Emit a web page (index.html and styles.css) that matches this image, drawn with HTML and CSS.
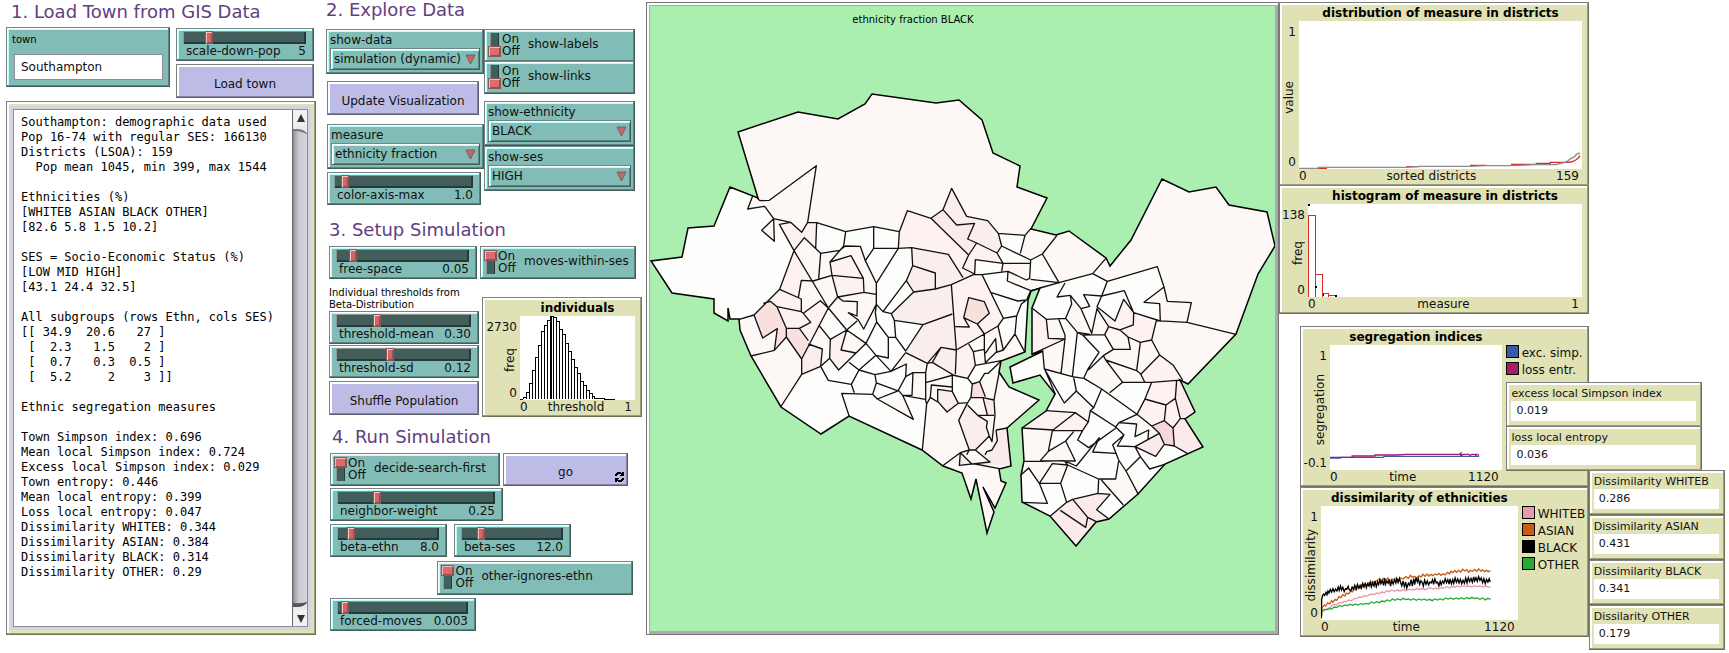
FILE: index.html
```html
<!DOCTYPE html>
<html lang="en">
<head>
<meta charset="utf-8">
<title>Town segregation model</title>
<link rel="stylesheet" href="styles.css">
</head>
<body>
<main class="board">

<section class="load">
  <h2>1. Load Town from GIS Data</h2>
  <div class="load-row">
    <div class="widget teal town">
      <label for="town">town</label>
      <input id="town" type="text" value="Southampton">
    </div>
    <div class="load-side">
      <div class="widget teal slider">
        <input id="scale" type="range" min="0" max="100" value="19">
        <div class="cap"><label for="scale">scale-down-pop</label><output>5</output></div>
      </div>
      <button class="widget btn">Load town</button>
    </div>
  </div>
  <div class="widget tan out">
    <div class="out-in">
<pre>Southampton: demographic data used
Pop 16-74 with regular SES: 166130
Districts (LSOA): 159
  Pop mean 1045, min 399, max 1544

Ethnicities (%)
[WHITEB ASIAN BLACK OTHER]
[82.6 5.8 1.5 10.2]

SES = Socio-Economic Status (%)
[LOW MID HIGH]
[43.1 24.4 32.5]

All subgroups (rows Ethn, cols SES)
[[ 34.9  20.6   27 ]
 [  2.3   1.5    2 ]
 [  0.7   0.3  0.5 ]
 [  5.2     2    3 ]]

Ethnic segregation measures

Town Simpson index: 0.696
Mean local Simpson index: 0.724
Excess local Simpson index: 0.029
Town entropy: 0.446
Mean local entropy: 0.399
Loss local entropy: 0.047
Dissimilarity WHITEB: 0.344
Dissimilarity ASIAN: 0.384
Dissimilarity BLACK: 0.314
Dissimilarity OTHER: 0.29</pre>
      <div class="bar">
        <button aria-label="Scroll up"><svg width="8" height="8" viewBox="0 0 8 8"><path d="M4 0L8 8H0Z" fill="#333"/></svg></button>
        <div class="track">
          <svg width="15" height="9" viewBox="0 0 15 9"><path d="M0 0H15V9Q12 3 4 3H0Z" fill="#e9e9ee"/><path d="M0 3H4Q12 3 15 9Q10 5 0 5Z" fill="#777"/></svg>
          <svg width="15" height="9" viewBox="0 0 15 9"><path d="M0 9H15V0Q12 6 4 6H0Z" fill="#e9e9ee"/><path d="M0 6H4Q12 6 15 0Q11 3 0 2Z" fill="#555"/></svg>
        </div>
        <button aria-label="Scroll down"><svg width="8" height="8" viewBox="0 0 8 8"><path d="M0 0H8L4 8Z" fill="#333"/></svg></button>
      </div>
    </div>
  </div>
</section>

<section class="control">
  <h2>2. Explore Data</h2>
  <div class="explore">
    <div class="stack">
      <div class="widget teal chooser">
        <label for="data">show-data</label>
        <div class="pick"><select id="data"><option>simulation (dynamic)</option></select><svg width="11" height="11" viewBox="0 0 11 11"><path d="M1 1H10L5.500 10Z" fill="#cc6464" stroke="#666"/></svg></div>
      </div>
      <button class="widget btn update">Update Visualization</button>
      <div class="widget teal chooser measure">
        <label for="measure">measure</label>
        <div class="pick"><select id="measure"><option>ethnicity fraction</option></select><svg width="11" height="11" viewBox="0 0 11 11"><path d="M1 1H10L5.500 10Z" fill="#cc6464" stroke="#666"/></svg></div>
      </div>
      <div class="widget teal slider axis">
        <input id="axis" type="range" min="0" max="100" value="5">
        <div class="cap"><label for="axis">color-axis-max</label><output>1.0</output></div>
      </div>
    </div>
    <div class="stack">
      <label class="widget teal switch"><input type="checkbox"><span class="onoff">On<br>Off</span><span class="name">show-labels</span></label>
      <label class="widget teal switch joined"><input type="checkbox"><span class="onoff">On<br>Off</span><span class="name">show-links</span></label>
      <div class="widget teal chooser ethnicity">
        <label for="ethn">show-ethnicity</label>
        <div class="pick"><select id="ethn"><option>BLACK</option></select><svg width="11" height="11" viewBox="0 0 11 11"><path d="M1 1H10L5.500 10Z" fill="#cc6464" stroke="#666"/></svg></div>
      </div>
      <div class="widget teal chooser">
        <label for="ses">show-ses</label>
        <div class="pick"><select id="ses"><option>HIGH</option></select><svg width="11" height="11" viewBox="0 0 11 11"><path d="M1 1H10L5.500 10Z" fill="#cc6464" stroke="#666"/></svg></div>
      </div>
    </div>
  </div>

  <h2 class="h-setup">3. Setup Simulation</h2>
  <div class="space-row">
    <div class="widget teal slider">
      <input id="free" type="range" min="0" max="100" value="10">
      <div class="cap"><label for="free">free-space</label><output>0.05</output></div>
    </div>
    <label class="widget teal switch"><input type="checkbox" checked><span class="onoff">On<br>Off</span><span class="name">moves-within-ses</span></label>
  </div>
  <div class="threshold-row">
    <div class="stack">
      <p class="note">Individual thresholds from<br>Beta-Distribution</p>
      <div class="widget teal slider">
        <input id="tmean" type="range" min="0" max="100" value="29">
        <div class="cap"><label for="tmean">threshold-mean</label><output>0.30</output></div>
      </div>
      <div class="widget teal slider sd">
        <input id="tsd" type="range" min="0" max="100" value="39">
        <div class="cap"><label for="tsd">threshold-sd</label><output>0.12</output></div>
      </div>
      <button class="widget btn shuffle">Shuffle Population</button>
    </div>
    <div class="widget tan plot p-ind">
      <h3>individuals</h3>
      <div class="yax"><span>2730</span><span class="vert">freq</span><span>0</span></div>
      <svg class="canvas" viewBox="0 0 345 252" preserveAspectRatio="none">
        <path fill="none" stroke="#000" stroke-width="3" shape-rendering="crispEdges" d="M0 250V249H9V250V244H18V250V230H27V250V202H36V250V163H45V250V124H54V250V88H63V250V46H72V250V28H81V250V13H90V250V2H93V250M90 2H99V250V5H108V250V16H117V250V40H126V250V55H135V250V82H144V250V106H153V250V130H162V250V154H171V250V171H180V250V195H189V250V208H198V250V222H207V250V233H216V250V240H222V250V246H252V249H285"/>
      </svg>
      <div class="xax"><span>0</span><span>threshold</span><span>1</span></div>
    </div>
  </div>

  <h2 class="h-run">4. Run Simulation</h2>
  <div class="run">
    <div class="row r1">
      <label class="widget teal switch"><input type="checkbox" checked><span class="onoff">On<br>Off</span><span class="name">decide-search-first</span></label>
      <button class="widget btn go"><span>go</span><svg width="9" height="10" viewBox="0 0 9 10" shape-rendering="crispEdges"><path d="M0 4V2H1V1H2V0H6V1H7V0H9V4H5V3H6V2H3V3H2V4ZM9 6V8H8V9H7V10H3V9H2V10H0V6H4V7H3V8H6V7H7V6Z"/></svg></button>
    </div>
    <div class="row r2">
      <div class="widget teal slider">
        <input id="nw" type="range" min="0" max="100" value="24">
        <div class="cap"><label for="nw">neighbor-weight</label><output>0.25</output></div>
      </div>
    </div>
    <div class="row r3">
      <div class="widget teal slider">
        <input id="be" type="range" min="0" max="100" value="11">
        <div class="cap"><label for="be">beta-ethn</label><output>8.0</output></div>
      </div>
      <div class="widget teal slider">
        <input id="bs" type="range" min="0" max="100" value="17">
        <div class="cap"><label for="bs">beta-ses</label><output>12.0</output></div>
      </div>
    </div>
    <div class="row r4">
      <label class="widget teal switch"><input type="checkbox" checked><span class="onoff">On<br>Off</span><span class="name">other-ignores-ethn</span></label>
    </div>
    <div class="row r5">
      <div class="widget teal slider">
        <input id="fm" type="range" min="0" max="100" value="3">
        <div class="cap"><label for="fm">forced-moves</label><output>0.003</output></div>
      </div>
    </div>
  </div>
</section>

<section class="view">
<svg viewBox="650 6 625 625" role="img" aria-label="Map of districts">
  <rect x="650" y="6" width="625" height="625" fill="#aaeeb0"/>
  <path id="coast" fill="#fdf8f6" d="M758 198L738 132L798 112L838 119L865 104L872 94L936 103L959 100L982 120L993 153L1020 166L1017 187L1047 198L1031 229L1056 235L1069 231L1106 258L1110 266L1131 240L1162 179L1189 192L1216 187L1229 205L1267 212L1275 246L1258 274L1236 334L1188 384L1180 380L1195 412L1185 419L1203 447L1165 464L1138 494L1109 519L1096 522L1076 546L1050 516L1022 502L1021 475L1024 461L1022 428L1046 411L1055 394L1040 375L1013 383L1010 367L1043 351L1032 354L1032 308L1040 288L1031 291L1028 300L1025 352L1001 361L999 372L1009 387L1039 400L1007 428L1011 466L999 469L1001 481L1006 483L995 508L983 487L994 512L987 533L976 479L971 499L962 473L943 466L922 450L849 416L821 434L781 407L751 356L740 330L739 319L730 319L728 308L728 321L714 313V299L672 293L651 261L682 257L688 228L714 226L730 187Z"/>

  <!-- pale districts, west and centre -->
  <g transform="translate(740 200) scale(.33333)">
    <path fill="#fdfdfc" d="M-29-38L38-12L23 27L74 19L101 56L65 91L103 124L104 60L118 73L162 152L119 268L42 345L-5 359L-35 357L-77 297L-203 278L-268 184L-175 172L-157 84L-79 78Z
    M230 68L317 95L401 80L478 95L475 145L515 143L518 197L499 242L521 276L454 341L463 361L549 374L497 453L453 514L497 492L497 530L519 518L516 586L557 597L547 750L328 650L242 703L134 620L185 523L242 499L269 475L271 418L236 375L265 324L320 390L352 362L371 387L409 313L409 250L361 139L316 138L299 151L242 160L227 146Z
    M775 100L855 106L841 160L785 138ZM706 179L789 190L785 214L704 222ZM785 138L872 180L789 190L771 159ZM726 224L804 214L802 243L872 272L860 300L830 348L790 355ZM872 180L907 162L957 248L872 238ZM900 265L957 248L1057 221L1102 244L1252 200L1272 261L1212 307L1259 311L1261 363L1181 338L1151 298L1125 363L1071 326L1050 400L1023 326L995 286L992 312L977 355L919 358L876 322ZM825 402L830 348L860 300L855 457ZM690 432L733 402L733 448L700 455ZM774 378L790 355L830 348L825 402L790 450ZM637 525L683 535L697 552L683 608L655 610L637 575ZM683 535L706 496L784 482L740 520L719 545L697 552ZM955 355L977 355L1012 397L1050 404L1094 404L1120 448L1045 508L1031 535L910 507L907 452L810 500L818 548L900 526L974 609L1009 573L1061 623L1051 632L1085 567L1191 643L1235 547L1148 547L1109 578L1001 532Z"/>
    <path fill="#fdf8f6" d="M230 68L227 146L242 160L236 236L219 243L162 152L118 73L152 67L185 97L203 67ZM320 390L378 430L348 459L303 450ZM519 518H556L557 597L516 586ZM412 597L476 572L520 658Z"/>
    <path fill="#fdf2f1" d="M118 73L152 67L185 97L203 67L230 68L227 146L193 113L162 152ZM162 152L219 243L184 241L175 293L119 268ZM119 268L184 297V335L111 320L91 304L70 310ZM111 320L184 335L212 367L178 385H139ZM270 186L333 167L370 235L276 226ZM276 226L370 235L372 277L293 291ZM190 340L241 302L265 324L205 432L178 385L212 367ZM478 95L502 32L573 55L686 165L668 204L704 222L669 233L625 163L515 143H475ZM634 254L702 223L726 224L790 355L774 378L649 450ZM271 418L320 390L303 450L348 459L296 510L269 475ZM686 165L710 129L771 159L789 190L706 179L704 222L668 204ZM649 450L686 432L700 455L706 496L683 535L646 523ZM876 330L919 358L925 415L975 417L878 463ZM1071 326L1125 363L1151 298L1181 338L1249 362L1235 420L1201 427L1164 411L1140 390L1106 380Z"/>
    <path fill="#faeeec" d="M515 143L625 163L669 233L634 254L586 267L521 276L499 242L518 197ZM521 276L634 254L637 342L549 374L463 361L454 341ZM549 374L637 342L649 450L603 442L562 490L497 458ZM185 477L205 432L247 447L242 499L185 523ZM609 29L635 -35L680 49L743 62L775 100L785 138L771 159L683 117L704 70L650 75ZM577 487L603 442L649 450L646 523ZM593 568L636 574L640 595L655 610L621 636L593 604ZM656 661L683 616L713 646L742 664L748 708L706 750H688Z"/>
    <path fill="#faeae9" d="M573 55L609 29L650 75L704 70L683 117L710 129L686 165ZM729 593L762 600L765 645H742ZM768 690L802 684L812 798L706 792L750 786L735 765L772 722ZM658 796L661 758L695 791Z"/>
    <path fill="#f9e0df" d="M42 345L91 304L111 320L139 385V411L103 451L112 386L68 414ZM139 385H178L205 432L185 477L139 411ZM686 293L733 305L748 340L712 372L671 353ZM703 550L719 545L734 593L690 592Z"/>
  </g>

  <!-- pale and pink districts, south-east -->
  <g transform="translate(1000 340) scale(.33333)">
    <path fill="#fdfdfc" d="M134 88L221 112L229 153L193 189ZM271 212L305 147L411 223L347 261ZM265 246L271 212L347 261L266 323L233 300ZM298 293L347 265L372 285L338 314L346 340L278 336ZM229 378L278 336L346 340L356 363L347 417L296 417ZM347 261L357 248L410 252L405 290L446 270L444 297L405 320L352 318L372 285ZM352 318L405 320L421 350L378 393L356 360L338 314ZM378 393L421 350L449 387L494 373L415 463ZM203 375L296 417L294 460L218 478L200 487L182 430ZM62 406L86 384L118 430H182L200 487L151 528L65 487ZM294 460L304 420L370 495L327 537L290 509L330 463ZM421 350L405 320L467 349L493 313L563 341L449 387ZM157 272L221 275L197 303L145 334ZM197 303L248 271L233 300L266 323L226 363Z"/>
    <path fill="#fdf2f1" d="M139 212L226 218L159 270L66 264ZM226 218L265 246L248 271H159ZM434 177L455 127L530 121L526 175L498 195ZM411 223L434 179L498 195L493 242L455 258ZM422 102L480 45L520 76L541 120L434 126ZM498 195L526 175L541 236L519 264L493 242Z"/>
    <path fill="#faeae9" d="M151 528L218 478L294 460L330 463L290 509L327 537L289 545L229 617ZM541 236L556 238L610 320L563 341L523 318L519 264ZM530 121L541 120L586 215L541 236L526 175ZM405 320L478 280L493 313L467 349Z"/>
    <path fill="#f7d8d8" d="M455 258L493 242L519 264L523 318L493 313L478 280Z"/>
  </g>

  <g fill="none" stroke="#111" stroke-width="4" stroke-linejoin="round">
    <path transform="translate(740 200) scale(.33333)" d="M38-12L23 27L74 19L101 56M52-5L60 2L88 1L229-103L203 67
    M101 56L65 91L103 124L101 56L152 67L185 97L203 67L230 68L317 95L401 80L478 95M152 67L118 73L162 152L193 113L242 160L299 151L316 138L361 139L376 182L409 250M230 68L227 146M317 95L311 138L270 186L333 167L370 235L276 226L270 186M242 160L236 236M162 152L265 324M162 152L119 268L42 345L-5 359M119 268L184 297V335L111 320M175 293L184 241L219 243L276 226L293 291L372 277L370 235M293 291L265 324M372 277L409 283V250M401 80V145L376 182M401 145H475L478 95L502 32L573 55L609 29L635-35L680 49L743 62L775 100L855 106L873 85
    M609 29L650 75L704 70L683 117L710 129L771 159L785 138L775 100M573 55L686 165L710 129M686 165L668 204L704 222M475 145L515 143L625 163L669 233M475 145L409 250M515 143L518 197L586 219V267M518 197L499 242L521 276L586 267L634 254L702 223M499 242L429 335L409 313V283M521 276L454 341L429 335M454 341L463 361L549 374L637 342M634 254L649 450L646 523M293 291L309 303L352 305L351 348L325 338L355 360L371 387L409 313L406 338L410 366M265 324L320 390L352 362M265 324L241 302L190 340L212 367L178 385H139L111 320L91 304L70 310M184 335L190 340M42 345L68 414L112 386L103 451L33 468M139 385V411L103 451M139 411L185 477L265 324M178 385L205 422M185 477V523L122 621M185 523L242 499L247 447L205 432M236 375L271 418L320 390L378 430L410 366L445 412H467L463 361M271 418L269 475L296 510L378 430M320 390L303 450L348 459M445 412V474L408 466L378 430M467 412L497 453L549 374M497 458L453 514L408 466L357 510L327 487M497 458L562 490L603 442L649 450M453 514L499 492L497 530L474 573M269 475L242 499L265 541L334 553L357 510L405 524L453 514M405 524L409 549L398 583L305 580L328 650M409 549L474 573M334 553L343 578M497 530L519 518H556M519 518L516 586H488M562 490L557 518V600M577 487L640 525L557 548M562 490L577 487L603 442
    M686 293L733 305L748 340L712 372L671 353ZM671 353L688 381L646 380M712 372L733 402M649 450L733 402L774 378L790 355L726 224H702M726 224L804 214L859 240L869 235L872 180L785 138M704 222L706 179L789 190H872M789 190L785 214M771 159L789 190M804 214L802 243L872 272L900 265M841 160L855 106M872 180L907 162L951 106M907 162L957 248L872 238M754 278L833 303L860 300L872 272M790 355L830 348L844 312L860 300M830 348L825 402L855 457M774 378L790 450L767 458M790 450L825 402
    M637 525V575L655 610L683 608L693 592L697 552L683 535L637 525M636 561L574 555L571 592L560 612M636 574L593 568V604L621 636L655 610M571 592L593 606M547 750L560 612L556 598L488 586L476 572L412 597L520 658L488 586M412 597L398 583M683 608L656 661L688 750L661 758L658 796L750 786L706 750H688M661 758L608 797M661 758L695 791M680 764L688 750M706 750L748 708L739 682L742 664L713 646L683 616M713 646H762M748 708L756 725L765 645L762 600L778 515M693 592L729 593L742 645M729 593L762 600M697 552L719 545L736 590M719 545L734 520H745L784 482M768 690L802 684M768 690L772 722L756 750L740 755L735 765M706 792L778 806M683 535L706 496L735 491L784 482M706 496L700 455L686 432M700 455L733 448V402M733 448L736 488L770 455L767 416L736 460"/>
    <path transform="translate(960 160) scale(.33333)" d="M398 341L437 296M240 384L297 368L398 341L442 364L592 320L612 381L622 424L694 428L681 487L828 523M315 369L291 411L331 406L363 446L389 439L371 404L425 408L442 364M425 408L493 392L521 458L601 483L599 431L552 427L612 381M425 408L411 440L465 483L491 418L521 458L520 495L480 510L446 500L411 446L395 520L363 446M331 406L335 432L317 475L259 478L215 443M317 475L352 517L390 523M259 478L265 535L315 537L215 583M315 537L303 640M295 475L315 525V537M352 517L337 650M352 517L368 525L434 524L460 568H511L504 531L480 510M368 525L417 577L385 625L371 655M446 500L434 524M460 568L430 587L385 630M504 531L541 547L575 540L589 482L681 487M541 547L530 632M430 587L437 600L530 632L543 642L599 585L575 540M599 585L640 616L668 660M437 600L488 667M248 572L253 627L337 650L371 655"/>
    <path transform="translate(1000 340) scale(.33333)" d="M134 88L166 163M134 88L193 189L229 153L281 203L271 212M252 115L305 147L411 223L434 179L455 127L530 121H541M221 112L229 153M281 203L305 147M329 158L368 127H455M422 102L434 126M434 177L498 195L526 175L530 121M526 175L541 236H556M498 195L493 242L519 264L541 236M411 223L455 258L493 242M455 258L478 280L493 313L523 318L519 264M523 318L563 341M478 280L405 320L352 318L372 285L347 261L357 248L411 223M357 248L410 252L405 290L446 270L444 297M405 320L467 349L493 313M405 320L421 350L378 393L415 463M421 350L449 387L494 373M372 285L338 314L356 360L378 393M347 261L271 212L265 246L226 218L139 212M226 218L159 270L66 264M159 272L248 271L265 246M248 271L233 300L266 323L347 265M157 272L145 334L197 303L221 275M145 334L121 362M197 303L226 363L121 362M73 364H121L192 362L203 375L296 417H347L356 363M192 362L229 378L298 293L278 336L346 340M203 375L182 430H118L157 371L203 375M62 406L86 384L118 430L142 490L65 487M182 430L200 487L151 528M200 487L218 478L294 460L296 417M294 460L330 463L290 509L327 537M304 420L370 495M181 511L257 562L263 532L289 545M218 478L263 532"/>
  </g>
  <use href="#coast" class="shore"/>
  <text x="913" y="23" text-anchor="middle" font-size="10">ethnicity fraction BLACK</text>
</svg>
</section>

<section class="charts">
  <div class="upper">
    <div class="widget tan plot p-dist">
      <h3>distribution of measure in districts</h3>
      <div class="yax"><span>1</span><span class="vert">value</span><span>0</span></div>
      <svg class="canvas" viewBox="0 0 849 444" preserveAspectRatio="none">
        <g fill="none" stroke-width="4">
        <path stroke="#d82c20" d="M58 442H84M322 437H362M513 433H563M636 430H712V427H754V424H800L818 423L830 417L838 411L843 404"/>
        <path stroke="#8d8d8d" d="M0 442H58V439H322L362 436H514L562 434H640L712 431H770L790 426L803 422L815 413L827 407L832 400L843 396"/></g>
      </svg>
      <div class="xax"><span>0</span><span>sorted districts</span><span>159</span></div>
    </div>
    <div class="widget tan plot p-hist">
      <h3>histogram of measure in districts</h3>
      <div class="yax"><span>138</span><span class="vert">freq</span><span>0</span></div>
      <svg class="canvas" viewBox="0 0 822 279" preserveAspectRatio="none" shape-rendering="crispEdges">
        <path fill="none" stroke="#d82c20" stroke-width="3" d="M1 279V34H22V279V211H44V279V268H62V279V273H84V279"/>
        <path d="M0 0H6V6H0ZM22 246H27V252H22ZM44 270H48V276H44ZM82 273H86V279H82Z"/>
      </svg>
      <div class="xax"><span>0</span><span>measure</span><span>1</span></div>
    </div>
  </div>
  <div class="lower">
    <div class="plots">
      <div class="widget tan plot p-seg">
        <h3>segregation indices</h3>
        <div class="yax"><span>1</span><span class="vert">segregation</span><span>-0.1</span></div>
        <svg class="canvas" viewBox="0 0 519 375" preserveAspectRatio="none">
          <g fill="none" stroke-width="4">
          <path stroke="#345da9" d="M0 339H32V337H160L165 334H395V330L400 334H449V330"/>
          <path stroke="#a71b6a" d="M0 337H67V333H136V330H200L230 328H392L396 324V332L402 328H420L424 332L428 328H440V332L444 328H449"/></g>
        </svg>
        <ul class="legend"><li><i class="blue"></i>exc. simp.</li><li><i class="wine"></i>loss entr.</li></ul>
        <div class="xax"><span>0</span><span>time</span><span>1120</span></div>
      </div>
      <div class="widget tan plot p-dis">
        <h3>dissimilarity of ethnicities</h3>
        <div class="yax"><span>1</span><span class="vert">dissimilarity</span><span>0</span></div>
        <svg class="canvas" viewBox="0 0 594 342" preserveAspectRatio="none">
          <g fill="none" stroke-width="4">
          <path stroke="#e599ab" d="M1 338L3 318L12 312L20 308L28 304L34 298L42 295L48 297L54 290L62 291L70 286L78 287L84 282L92 284L100 277L108 278L114 273L122 274L130 269L138 271L146 266L154 264L160 266L168 261L176 263L184 258L192 260L198 254L206 257L214 252L222 256L230 252L240 255L248 250L256 254L264 251L274 250L282 252L290 247L298 251L306 247L314 251L322 248L330 246L338 249L346 246L354 250L362 245L370 247L380 242L388 246L396 241L404 244L412 240L420 243L430 239L438 242L446 240L456 243L464 239L472 242L480 240L488 243L498 240L506 244L512 242"/>
          <path stroke="#c65c17" d="M1 330L3 305L10 297L14 300L20 290L26 294L32 284L36 289L42 280L48 283L54 272L60 275L66 266L72 270L76 262L84 263L90 254L94 258L100 248L106 252L112 243L118 247L122 236L128 242L134 235L138 238L144 230L150 234L156 226L162 231L168 224L176 219L182 224L188 217L196 223L202 216L208 226L214 219L220 222L226 217L234 222L240 216L248 219L256 212L264 217L270 208L276 214L282 211L290 216L296 209L302 213L308 205L314 211L320 204L326 210L332 205L338 209L344 204L350 207L356 202L362 208L368 204L376 206L382 199L388 204L392 196L398 200L404 194L410 199L416 193L422 198L428 190L434 195L440 191L446 199L450 193L458 196L464 190L470 196L476 189L484 196L488 191L494 197L500 193L506 197L512 194"/>
          <path stroke="#29aa30" d="M1 336L3 316L10 310L18 311L26 308L32 309L40 303L48 304L56 299L64 301L72 297L80 299L88 295L96 298L104 294L112 297L120 293L128 295L136 292L144 294L152 288L160 292L168 287L176 290L184 285L192 287L200 282L208 285L216 279L224 283L232 278L240 282L248 277L256 281L264 279L272 282L280 278L288 283L296 279L304 282L312 279L320 283L328 280L336 284L344 279L352 282L360 278L368 282L376 276L384 279L392 276L400 280L408 276L416 279L424 275L432 279L440 275L448 278L456 274L464 278L472 276L480 280L488 276L496 282L504 277L512 280"/>
          <path stroke="#000" stroke-width="4" d="M1 336L2 280L5 268L8 264L11 268L15 259L18 266L21 255L24 261L28 250L32 258L36 248L40 257L44 249L48 255L52 243L55 253L59 240L62 252L66 244L70 257L74 248L78 250L82 241L85 251L90 254L94 243L98 250L102 238L106 249L110 235L114 246L118 238L122 247L126 232L130 243L134 230L137 245L141 233L145 240L149 228L152 243L156 231L160 240L163 225L167 242L171 228L174 236L178 221L181 233L185 224L189 238L192 216L195 235L199 225L203 232L206 220L210 240L214 224L218 234L222 221L226 231L229 218L233 230L237 217L240 228L244 240L248 225L252 242L256 228L259 246L264 232L268 238L272 221L276 240L280 218L283 236L287 215L291 228L294 218L298 235L302 224L306 230L309 240L313 222L317 235L321 225L325 237L329 228L333 231L337 221L340 235L344 219L348 231L352 228L356 240L360 226L363 236L367 225L371 232L375 218L379 230L383 221L387 234L390 219L394 233L398 221L401 232L405 216L409 229L413 219L417 231L421 220L425 233L429 223L433 232L437 216L441 231L445 215L449 227L453 217L457 229L461 213L464 225L468 215L472 226L476 212L480 223L484 216L488 230L492 218L496 233L500 220L504 228L508 218L511 228"/></g>
        </svg>
        <ul class="legend"><li><i class="pink"></i>WHITEB</li><li><i class="orange"></i>ASIAN</li><li><i class="black"></i>BLACK</li><li><i class="green"></i>OTHER</li></ul>
        <div class="xax"><span>0</span><span>time</span><span>1120</span></div>
      </div>
    </div>
    <div class="mons-a">
      <div class="widget tan monitor"><span>excess local Simpson index</span><output>0.019</output></div>
      <div class="widget tan monitor"><span>loss local entropy</span><output>0.036</output></div>
    </div>
    <div class="mons-b">
      <div class="widget tan monitor"><span>Dissimilarity WHITEB</span><output>0.286</output></div>
      <div class="widget tan monitor"><span>Dissimilarity ASIAN</span><output>0.431</output></div>
      <div class="widget tan monitor"><span>Dissimilarity BLACK</span><output>0.341</output></div>
      <div class="widget tan monitor"><span>Dissilarity OTHER</span><output>0.179</output></div>
    </div>
  </div>
</section>
</main>
</body>
</html>
```
FILE: styles.css
```css
* { box-sizing: border-box; }
body {
  margin: 0;
  background: #fff;
  color: #111;
  font: 12px/14px "DejaVu Sans", sans-serif;
}
button, input, select { font: inherit; color: inherit; margin: 0; }
h2 {
  margin: 0;
  color: #61407f;
  font-size: 18px;
  line-height: 18px;
  font-weight: normal;
  white-space: nowrap;
}
.board {
  display: grid;
  grid-template-columns: minmax(0, 310fr) minmax(0, 330fr) minmax(0, 633fr) minmax(0, 446fr);
  align-items: start;
  padding: 0 4px 0 6px;
}

/* bevelled widgets */
.widget {
  border: 1px solid #7f7f7f;
  border-right-color: var(--dark);
  border-bottom-color: var(--dark);
  background: var(--face);
  box-shadow: inset -1px -1px 0 var(--mid), inset 1px 1px 0 #fff, inset 2px 2px 0 var(--light);
}
.teal { --face: #82bcb6; --light: #b5ffff; --mid: #5b847f; --dark: #415e5b; }
.tan { --face: #e0e1b5; --light: #fff; --mid: #9d9e7f; --dark: #70715b; }
.btn {
  --face: #bcbce6; --light: #fff; --mid: #8484a1; --dark: #5e5e73;
  display: block;
  height: 34px;
  padding: 5px 0 0;
  border-radius: 0;
  text-align: center;
}
.stack { display: flex; flex-direction: column; min-width: 0; }

.slider { height: 33px; padding: 2px 7px 0 6px; }
.slider input {
  display: block;
  width: 100%;
  height: 13px;
  appearance: none;
  background: linear-gradient(#425e5a, #425e5a) 0 1px / 100% 12px no-repeat;
  box-shadow: inset 1px 1px 0 #8a9a98, inset -2px -2px 0 #25383a;
}
.slider input::-webkit-slider-thumb {
  appearance: none;
  width: 8px;
  height: 13px;
  border: 1px solid #8a5a5a;
  background: #cc6868;
  box-shadow: inset 1px 1px 0 #ffc0c0, inset -1px -1px 0 #994c4c;
}
.cap { display: flex; justify-content: space-between; padding-left: 3px; line-height: 15px; white-space: nowrap; }

.switch { display: flex; align-items: flex-start; height: 33px; padding: 3px 0 0 3px; white-space: nowrap; }
.switch input {
  display: flex;
  flex: none;
  width: 13px;
  height: 24px;
  appearance: none;
  align-items: flex-end;
  background: linear-gradient(90deg, #8a9a98 1px, #425e5a 1px, #425e5a 8px, #25383a 8px) center / 9px 100% no-repeat;
}
.switch input::before {
  content: "";
  width: 13px;
  height: 9px;
  border: 1px solid #8a5a5a;
  background: #d96c6c;
  box-shadow: inset 1px 1px 0 #ffb0b0, inset -1px -1px 0 #994c4c;
}
.switch input:checked { align-items: flex-start; }
.onoff { width: 27px; padding-left: 1px; line-height: 12px; }
.name { line-height: 22px; }

.chooser { height: 45px; padding: 3px 3px 0; }
.chooser label { display: block; line-height: 15px; }
.pick { display: grid; align-items: center; }
.pick select {
  grid-area: 1 / 1;
  width: 100%;
  height: 22px;
  padding: 0 0 1px 3px;
  border: 1px solid #7f7f7f;
  border-radius: 0;
  border-right-color: #415e5b;
  border-bottom-color: #415e5b;
  appearance: none;
  background: #82bcb6;
  box-shadow: inset 1px 1px 0 #fff, inset 2px 2px 0 #b5ffff, inset -1px -1px 0 #5b847f;
}
.pick svg { grid-area: 1 / 1; justify-self: end; margin-right: 4px; pointer-events: none; }

/* load column */
.load { padding-top: 3px; }
.load h2 { padding-left: 5px; margin-bottom: 6px; }
.load-row { display: grid; grid-template-columns: 164fr 138fr; gap: 6px; padding-right: 2px; }
.load-side { padding-top: 1px; min-width: 0; }
.load-side .btn { width: 100%; margin-top: 3px; }
.town { height: 60px; padding: 3px 6px 0 5px; font-size: 10px; }
.town label { display: block; height: 23px; line-height: 18px; color: #000; }
.town input { display: block; width: calc(100% - 2px); height: 26px; margin-left: 2px; padding: 0 6px; border: 1px solid #8c8c9c; background: #fff; font-size: 12px; }
.out { margin-top: 3px; padding: 4px 4px 4px 3px; }
.out-in { display: flex; border: 3px solid #d3d4de; outline: 1px solid #8c8c9c; outline-offset: -4px; background: #fff; }
.out pre {
  flex: 1;
  min-width: 0;
  height: 518px;
  margin: 0;
  padding: 6px 0 0 8px;
  font: 12px/15px "DejaVu Sans Mono", monospace;
  color: #000;
}
.bar { display: flex; flex: none; flex-direction: column; width: 16px; border-left: 1px solid #666; }
.bar button { flex: none; display: grid; place-items: center; width: 100%; height: 17px; padding: 0; border: 0; background: #f0f0f3; }
.track {
  flex: 1;
  display: flex;
  flex-direction: column;
  justify-content: space-between;
  background: linear-gradient(90deg, #8e8e92, #c8c8ce 35%, #d8d8e0);
}

/* control column */
.control { padding: 1px 0 0 10px; }
.control h2 { padding-left: 0; margin-bottom: 10px; }
.control .h-setup { margin: 16px 0 7px; padding-left: 3px; }
.control .h-run { margin: 11px 0 7px; padding-left: 6px; }
.explore { display: grid; grid-template-columns: minmax(0, 158fr) minmax(0, 151fr); align-items: start; padding-right: 11px; }
.update { margin: 7px 5px 9px 1px; }
.measure { margin-left: 1px; }
.axis { margin: 3px 3px 0 1px; }
.joined { margin-top: -1px; }
.ethnicity { margin-top: 7px; }
.space-row { display: grid; grid-template-columns: 148fr 156fr; gap: 3px; padding: 0 10px 0 3px; }
.threshold-row { display: grid; grid-template-columns: minmax(0, 150fr) minmax(0, 160fr); gap: 3px; align-items: end; padding: 8px 4px 0 3px; }
.threshold-row .stack { padding-bottom: 2px; }
.note { margin: 0; font-size: 10px; line-height: 12px; white-space: nowrap; color: #000; }
.sd { margin-top: 1px; }
.shuffle { margin-top: 3px; }
.run { padding-left: 4px; }
.row { display: grid; }
.r1 { grid-template-columns: 170fr 125fr 15fr; column-gap: 3px; }
.r2 { grid-template-columns: 173fr 143fr; margin-top: 2px; }
.r3 { grid-template-columns: 117fr 117fr 68fr; column-gap: 7px; margin-top: 3px; }
.r4 { grid-template-columns: 195fr; margin-top: 4px; padding: 0 4% 0 34%; }
.r4 .switch { height: 34px; }
.r5 { grid-template-columns: 146fr 170fr; margin-top: 3px; }
.go { display: grid; height: 33px; align-items: center; }
.go span, .go svg { grid-area: 1 / 1; }
.go svg { place-self: end; margin: 0 3px 3px 0; }

/* map */
.view {
  margin-top: 2px;
  padding: 3px;
  border: 1px solid #747474;
  background: #ababab;
  box-shadow: inset 2px 2px 0 #fff;
}
.view svg { display: block; width: 100%; }
.view text { fill: #000; }
.shore { fill-opacity: 0; stroke: #000; stroke-width: 1.5px; }

/* charts */
.charts { padding-top: 2px; }
.upper { display: grid; grid-template-columns: minmax(0, 310fr); padding-right: 136px; }
.plot {
  display: grid;
  grid-template-columns: var(--y) minmax(0, 1fr) var(--legend, 0px);
  grid-template-rows: 16px auto 14px;
  padding: 2px 6px 2px 2px;
  color: #111;
}
.plot h3 { grid-area: 1 / 2; justify-self: center; margin: 0; font-size: 12px; line-height: 16px; white-space: nowrap; color: #000; }
.yax { grid-area: 2 / 1; display: flex; flex-direction: column; justify-content: space-between; align-items: flex-end; padding: 4px 3px 0 0; line-height: 14px; }
.vert { writing-mode: vertical-rl; transform: rotate(180deg); line-height: 13px; }
.canvas { grid-area: 2 / 2; display: block; width: 100%; background: #fff; }
.xax { grid-area: 3 / 2; display: flex; justify-content: space-between; padding-right: 3px; }
.p-ind { --y: 35px; }
.p-ind .canvas { height: 84px; }
.p-dist { --y: 17px; }
.p-dist .canvas { height: 148px; }
.p-hist { --y: 26px; }
.p-hist .canvas { height: 93px; }
.p-hist { margin-top: -1px; }
.p-seg { --y: 27px; --legend: 80px; }
.p-seg .canvas { height: 125px; }
.p-dis { --y: 18px; --legend: 64px; }
.p-dis .canvas { height: 114px; }
.p-seg .yax, .p-dis .yax { padding-bottom: 0; }
.legend { grid-area: 2 / 3; margin: 0 0 0 4px; padding: 0; list-style: none; white-space: nowrap; }
.legend li { display: flex; gap: 3px; height: 17px; line-height: 17px; }
.legend i { flex: none; width: 13px; height: 13px; border: 1px solid #000; }
.blue { background: #345da9; }
.wine { background: #a71b6a; }
.pink { background: #e599ab; }
.orange { background: #c65c17; }
.black { background: #000; }
.green { background: #29aa30; }
.lower {
  display: grid;
  grid-template-columns: 206fr 82fr 113fr 23fr;
  align-items: start;
  margin-top: 12px;
  padding-left: 21px;
}
.plots { grid-area: 1 / 1 / 2 / 3; min-width: 0; }
.mons-a { grid-area: 1 / 2 / 2 / 4; margin-top: 56px; }
.mons-b { grid-area: 1 / 3 / 2 / 5; margin-top: 144px; }
.monitor { height: 45px; padding: 3px 5px 0 4px; font-size: 11px; white-space: nowrap; }
.mons-a .monitor + .monitor { margin-top: -1px; }
.monitor span, .monitor output { display: block; }
.monitor span { line-height: 15px; }
.monitor output { height: 20px; padding-left: 5px; background: #fff; line-height: 20px; }
```
